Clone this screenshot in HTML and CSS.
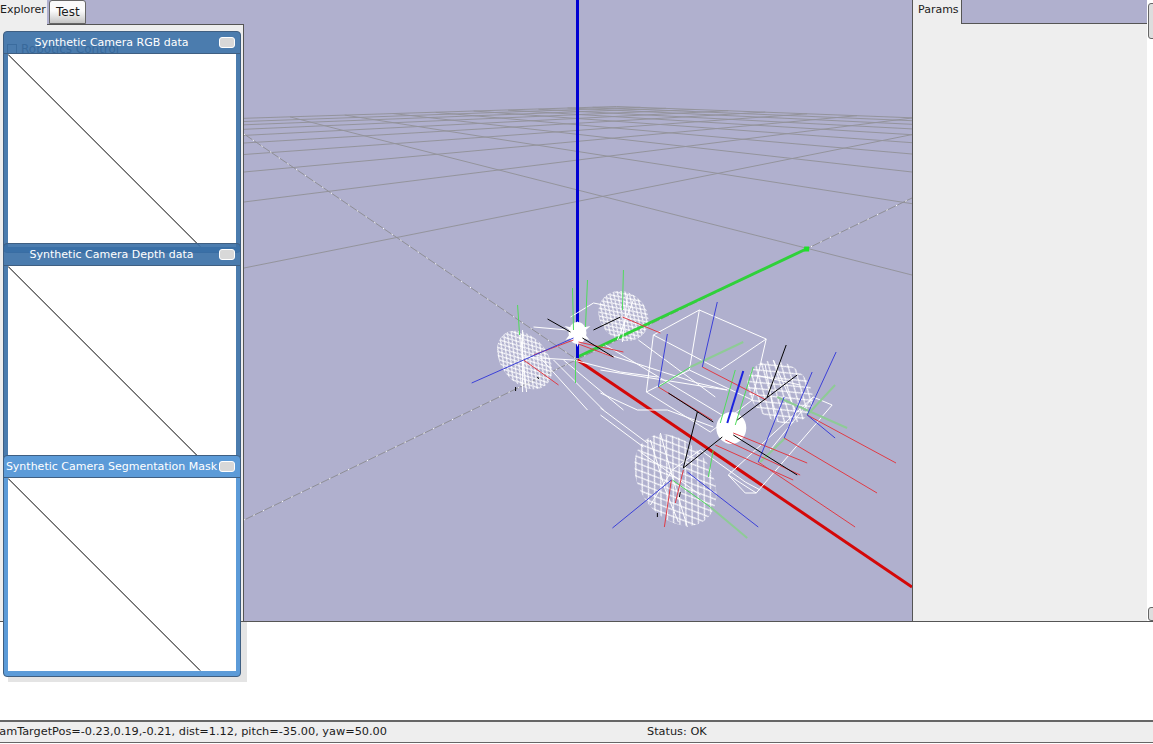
FILE: index.html
```html
<!DOCTYPE html>
<html lang="en">
<head>
<meta charset="utf-8">
<title>Physics Server</title>
<link rel="stylesheet" href="styles.css">
</head>
<body>
<div class="app">
  <div class="main">
    <aside class="left">
      <div class="tabs">
        <div class="tab tab-active">Explorer</div>
        <div class="tab tab-idle">Test</div>
      </div>
      <div class="panel">
        <div class="tree-row"><span class="tree-box"></span><span>Robotics Control</span></div>
      </div>
    </aside>
    <div class="viewport">
      <svg class="scene" viewBox="243 0 669 621" preserveAspectRatio="none" aria-label="3D view of a wheeled robot wireframe on a grid">
        <defs>
          <pattern id="hatch-small" width="7" height="4.600" patternUnits="userSpaceOnUse">
            <path class="hatch" d="M0 0L3.500 2.300L7 0M0 4.600L3.500 2.300L7 4.600"/>
          </pattern>
          <pattern id="hatch-large" width="11" height="7.500" patternUnits="userSpaceOnUse">
            <path class="hatch" d="M0 0L5.500 3.750L11 0M0 7.500L5.500 3.750L11 7.500"/>
          </pattern>
        </defs>

        <g class="grid">
          <path d="M243 268L912 134.600M243 202L912 118M243 172L857 115.700M243 154.500L807 113.800M243 143L765 112.100M243 135.400L728 110.700M243 129.300L694.500 109.500M243 124.800L665.600 108.300M243 121.500L640 107.300M243 118.300L616 106.500"/>
          <path d="M289 116.900L912 275M344 115.100L912 203.700M392.500 113.600L912 172M435 112.400L912 154M473 111L912 142.700M507.500 110.200L912 134.700M538 109.300L912 128.900M567 108L912 124.300M592 107.300L912 120.700M616 106.500L912 117.800"/>
          <path class="axis" d="M243 134L577 360M243 520L912 198"/>
        </g>
        <path class="axis-dots" d="M243 134L577 360M243 520L912 198"/>

        <ellipse class="wheel-small" cx="524" cy="360" rx="33" ry="23" transform="rotate(50 524 360)"/>
        <ellipse class="wheel-small" cx="623" cy="316" rx="27" ry="23" transform="rotate(45 623 316)"/>
        <ellipse class="wheel-large" cx="780" cy="392" rx="36" ry="28" transform="rotate(40 780 392)"/>
        <ellipse class="wheel-large" cx="675" cy="480" rx="50" ry="36" transform="rotate(55 675 480)"/>

        <path class="axis-red" d="M577 360L912 587"/>
        <path class="axis-green" d="M577 357L806 249"/>
        <path class="axis-blue" d="M577 0V358"/>
        <rect class="axis-tip" x="804" y="246.500" width="5" height="5"/>

        <g class="wire">
          <path d="M653 335L699 310L766 339L752 400L710 432L646 392ZM699 310L689 370L646 392M766 339L720 370L653 335M689 370L752 400"/>
          <path d="M728 475L813 397L832 405L756 493ZM728 475L745 493L756 493M813 397L770 450"/>
          <path d="M533 327L567 330M593 303L570 317M593 303L603 305M522 357L573 360L620 372L657 377M553 360L603 410M540 358L587 410M563 360L623 410"/>
          <path d="M600 370L707 387L727 390M600 393L637 410L667 410L713 427M600 408L647 443M600 415L643 447M600 352L697 383L727 390M638 340L715 397M605 345L730 420M700 450L745 482L760 490"/>
          <path d="M522 330V392M520 335L526 392M627 295L622 342M633 300L617 340M660 433L670 470L687 527M650 440L665 490L678 522M640 452L700 495M700 450L672 470L650 505M773 360L795 410M755 375L800 385M765 365L775 420"/>
        </g>

        <ellipse class="hub" cx="577" cy="333" rx="9" ry="11"/>
        <ellipse class="hub" cx="731" cy="428" rx="15" ry="16"/>
        <path class="hub" d="M577 321L580 328L590 326L583 332L589 340L580 337L577 347L574 337L565 340L571 332L564 326L574 328Z"/>

        <g class="ln-green">
          <path d="M623 270L622 310M517 305L519 335M572 288L573 330M587 280L585 327M575 360L575 383M690 367L658 387M735 370L720 423M753 367L735 425M708 477L713 450M672 480L710 507"/>
        </g>
        <g class="ln-pale">
          <path d="M743 342L690 367M835 385L807 415M847 428L777 397M785 438L760 462M747 538L710 507"/>
        </g>
        <g class="ln-red">
          <path d="M523 360L558 385M622 317L660 333M578 342L623 352M578 344L613 357M533 355L573 340M658 387L712 420M702 367L766 400M807 415L896 463M784 438L877 493M758 462L855 527M733 433L807 463M725 440L800 475M715 445L793 480M671 480L664 527M683 470L675 503"/>
        </g>
        <g class="ln-blue">
          <path d="M471 383L523 360L573 338M667 334L658 387M717 302L702 367M836 352L807 415L835 438M812 372L784 438M784 397L758 462M612 528L671 480M687 472L758 527"/>
          <path class="ln-thick" d="M743 371L727 423"/>
        </g>
        <g class="ln-black">
          <path d="M547 319L570 332M582 338L613 357M593 330L620 317M515 387V391M537 377L538 379M786 345L767 397M797 375L737 420M668 393L713 422M697 412L683 468L722 437M733 435L797 475M680 492L679 497M657 513V517"/>
        </g>
      </svg>
    </div>
    <aside class="right">
      <div class="tabs-right">
        <div class="tab tab-params">Params</div>
        <div class="tab-fill"></div>
      </div>
      <div class="params-body"></div>
      <span class="scroll-btn scroll-top"></span>
      <span class="scroll-btn scroll-bottom"></span>
    </aside>
  </div>

  <div class="console"><div class="win-shadow"></div></div>

  <footer class="status">
    <span class="status-cam">camTargetPos=-0.23,0.19,-0.21, dist=1.12, pitch=-35.00, yaw=50.00</span>
    <span class="status-state">Status: OK</span>
  </footer>

  <section class="window win-rgb">
    <header class="win-title"><span class="win-name">Synthetic Camera RGB data</span><span class="win-min"></span></header>
    <svg class="win-canvas" viewBox="0 0 229 193"><path class="diag" d="M0 0L193 193"/></svg>
  </section>
  <section class="window win-depth">
    <header class="win-title"><span class="win-name">Synthetic Camera Depth data</span><span class="win-min"></span></header>
    <svg class="win-canvas" viewBox="0 0 229 193"><path class="diag" d="M0 0L193 193"/></svg>
  </section>
  <section class="window win-seg">
    <header class="win-title"><span class="win-name">Synthetic Camera Segmentation Mask</span><span class="win-min"></span></header>
    <svg class="win-canvas" viewBox="0 0 229 193"><path class="diag" d="M0 0L193 193"/></svg>
  </section>
</div>
</body>
</html>
```

FILE: styles.css
```css
* { box-sizing: border-box; }

html, body {
  margin: 0;
  height: 100%;
  background: #fff;
  overflow: hidden;
}

body {
  font-family: "DejaVu Sans", sans-serif;
  font-size: 12px;
  color: #1c1c1c;
}

.app {
  position: relative;
  display: flex;
  flex-direction: column;
  width: 1153px;
  height: 744px;
  overflow: hidden;
}

.main {
  display: flex;
  flex: 0 0 622px;
  border-bottom: 1px solid #555;
  background: #b0b0ce;
}

.left {
  display: flex;
  flex-direction: column;
  flex: 0 0 244px;
}

.tabs {
  display: flex;
  flex: 0 0 24px;
  gap: 2px;
}

.tab {
  font-size: 11px;
  line-height: 20px;
}

.tab-active {
  width: 47px;
  margin-bottom: -1px;
  background: #eee;
  z-index: 1;
  white-space: nowrap;
}

.tab-idle {
  width: 37px;
  height: 24px;
  padding-left: 6px;
  padding-top: 1px;
  border: 1px solid #666;
  border-radius: 3px 3px 0 0;
  background: linear-gradient(#fafafa 45%, #c4c4c4);
  font-size: 12px;
}

.panel {
  flex: 1;
  padding: 17px 0 0 7px;
  border-top: 1px solid #555;
  border-right: 1px solid #555;
  background: #eee;
}

.tree-row {
  display: flex;
  align-items: center;
  gap: 4px;
  color: #333;
  font-size: 12px;
}

.tree-box {
  width: 10px;
  height: 10px;
  border: 1px solid #555;
}

.viewport {
  flex: 1;
  min-width: 0;
}

.scene {
  display: block;
  width: 100%;
  height: 100%;
}

.grid path {
  fill: none;
  stroke: #94949c;
  stroke-width: 1;
}

.grid .axis {
  stroke: #8f8f96;
}

.axis-dots {
  fill: none;
  stroke: #fff;
  stroke-width: 1;
  stroke-dasharray: 1.500 9;
}

.hatch {
  fill: none;
  stroke: #fff;
  stroke-width: 1;
}

.wheel-small {
  fill: url(#hatch-small);
}

.wheel-large {
  fill: url(#hatch-large);
}

.axis-red, .axis-green, .axis-blue {
  fill: none;
  stroke-width: 3;
}

.axis-red { stroke: #d40808; }
.axis-green { stroke: #2fd13a; }
.axis-blue { stroke: #0000d2; }
.axis-tip { fill: #1ee02a; }

.wire path {
  fill: none;
  stroke: #fff;
  stroke-width: 1;
}

.hub { fill: #fff; }

.ln-green path, .ln-pale path, .ln-red path, .ln-blue path, .ln-black path {
  fill: none;
  stroke-width: 1;
}

.ln-green path { stroke: #4fdc5a; }
.ln-pale path { stroke: #8ecb96; stroke-width: 2; }
.ln-red path { stroke: #e03a44; }
.ln-blue path { stroke: #3a3fd8; }
.ln-blue .ln-thick { stroke: #1a22e0; stroke-width: 2; }
.ln-black path { stroke: #000; }

.right {
  position: relative;
  display: flex;
  flex-direction: column;
  flex: 0 0 241px;
  background: #fff;
}

.tabs-right {
  display: flex;
  flex: 0 0 24px;
  border-left: 1px solid #555;
}

.tab-params {
  width: 48px;
  padding-left: 5px;
  background: #eee;
}

.tab-fill {
  flex: 1;
  margin-right: 6px;
  background: #b0b0ce;
  border-left: 1px solid #555;
  border-bottom: 1px solid #555;
}

.params-body {
  flex: 1;
  margin-right: 6px;
  border-left: 1px solid #555;
  background: #eee;
}

.scroll-btn {
  position: absolute;
  left: 236px;
  width: 8px;
  border: 1px solid #666;
  border-radius: 3px;
  background: #ddd;
}

.scroll-top {
  top: 3px;
  height: 36px;
}

.scroll-bottom {
  top: 607px;
  height: 14px;
}

.console {
  position: relative;
  flex: 1;
  background: #fff;
}

.win-shadow {
  position: absolute;
  top: 0;
  left: 8px;
  width: 239px;
  height: 60px;
  background: #e4e4e4;
}

.status {
  display: flex;
  flex: 0 0 23px;
  align-items: center;
  padding-bottom: 2px;
  border-top: 2px solid #666;
  border-bottom: 1px solid #666;
  background: #eee;
  font-size: 11.300px;
  white-space: nowrap;
  margin-bottom: 1px;
}

.status-cam {
  flex: 0 0 647px;
  margin-left: -7px;
}

.status-state {
  margin-left: 7px;
}

.window {
  position: absolute;
  left: 3px;
  display: flex;
  flex-direction: column;
  width: 238px;
  height: 222px;
  padding: 0 4px 5px;
  border: 1px solid #3f5f82;
  border-radius: 4px;
  background: rgba(56, 111, 166, 0.9);
}

.win-rgb { top: 31px; }
.win-depth { top: 243px; }

.win-seg {
  top: 455px;
  background: #5c9bd8;
}

.win-title {
  display: flex;
  flex: 0 0 22px;
  align-items: center;
  color: #fff;
  white-space: nowrap;
  border-bottom: 1px solid #3f5f82;
  margin: 0 -4px;
  padding: 0 5px 1px 0;
}

.win-name {
  flex: 1;
  min-width: 0;
  text-align: center;
  font-size: 11px;
}

.win-min {
  flex: 0 0 16px;
  height: 11px;
  border: 1px solid #fff;
  border-radius: 3px;
  background: #d8d8d8;
}

.win-canvas {
  display: block;
  flex: 1;
  min-height: 0;
  width: 100%;
  background: #fff;
}

.diag {
  fill: none;
  stroke: #000;
  stroke-width: 1;
}
```
